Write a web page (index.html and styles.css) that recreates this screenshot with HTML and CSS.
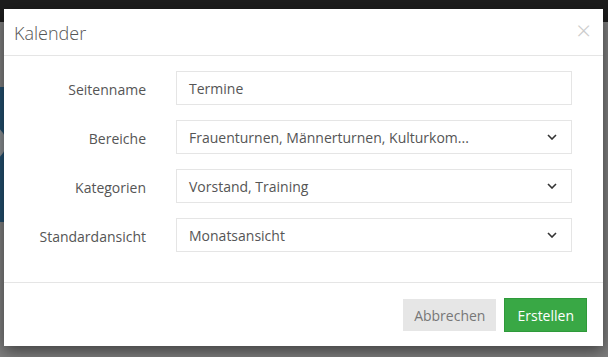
FILE: index.html
```html
<!DOCTYPE html>
<html lang="de">
<head>
    <meta charset="UTF-8">
    <meta name="viewport" content="width=device-width, initial-scale=1.0">
    <title>Kalender</title>
    <link rel="stylesheet" href="styles.css">
</head>
<body>
    <div class="topbar"></div>
    <div class="page">
        <div class="hero">
            <span class="hero-circle"></span>
        </div>
    </div>

    <div class="modal">
        <div class="modal-header">
            <h4 class="modal-title">Kalender</h4>
            <span class="close">&times;</span>
        </div>

        <div class="modal-body">
            <label class="form-label">Seitenname</label>
            <div class="form-control">Termine</div>

            <label class="form-label">Bereiche</label>
            <div class="form-control select">
                <span class="value">Frauenturnen, Männerturnen, Kulturkom...</span>
                <svg class="chevron" width="10" height="6" viewBox="0 0 10 6"><path d="M1 1l4 4 4-4" fill="none" stroke="#333" stroke-width="1.6"/></svg>
            </div>

            <label class="form-label">Kategorien</label>
            <div class="form-control select">
                <span class="value">Vorstand, Training</span>
                <svg class="chevron" width="10" height="6" viewBox="0 0 10 6"><path d="M1 1l4 4 4-4" fill="none" stroke="#333" stroke-width="1.6"/></svg>
            </div>

            <label class="form-label">Standardansicht</label>
            <div class="form-control select">
                <span class="value">Monatsansicht</span>
                <svg class="chevron" width="10" height="6" viewBox="0 0 10 6"><path d="M1 1l4 4 4-4" fill="none" stroke="#333" stroke-width="1.6"/></svg>
            </div>
        </div>

        <div class="modal-footer">
            <button class="btn btn-default">Abbrechen</button>
            <button class="btn btn-success">Erstellen</button>
        </div>
    </div>
</body>
</html>
```

FILE: styles.css
```css
body {
    margin: 0;
    font-family: 'Open Sans', 'Liberation Sans', sans-serif;
    font-size: 14px;
    color: #555;
    background-color: #7f7f7f;
    height: 357px;
    overflow: hidden;
}
.topbar {
    height: 22px;
    background-color: #1d1d1d;
}
.page {
    padding-top: 65px;
}
.hero {
    width: 120px;
    height: 135px;
    background-color: #23506f;
    position: relative;
}
.hero-circle {
    position: absolute;
    left: -30px;
    top: 38px;
    width: 36px;
    height: 36px;
    border-radius: 50%;
    background-color: #8a8f93;
}
.modal {
    position: absolute;
    top: 9px;
    left: 4px;
    width: 599px;
    background-color: #fff;
    box-shadow: 0 5px 15px rgba(0, 0, 0, 0.5);
}
.modal-header {
    display: flex;
    justify-content: space-between;
    align-items: flex-start;
    padding: 12px 12px 10px 10px;
    border-bottom: 1px solid #e5e5e5;
}
.modal-title {
    margin: 0;
    font-size: 18px;
    font-weight: 300;
    line-height: 24px;
    color: #555;
}
.close {
    font-size: 26px;
    line-height: 14px;
    margin-top: 2px;
    color: #ccc;
    font-weight: 300;
}
.modal-body {
    display: grid;
    grid-template-columns: 127px 1fr;
    column-gap: 30px;
    row-gap: 15px;
    padding: 15px 31px 30px 15px;
    align-items: center;
}
.form-label {
    text-align: right;
    color: #555;
    padding-top: 2px;
}
.form-control {
    height: 32px;
    border: 1px solid #e5e5e5;
    padding: 0 12px;
    display: flex;
    align-items: center;
    justify-content: space-between;
    color: #555;
}
.chevron {
    margin-right: 2px;
}
.modal-footer {
    display: flex;
    justify-content: flex-end;
    gap: 8px;
    padding: 15px 16px 14px 15px;
    border-top: 1px solid #e5e5e5;
}
.btn {
    font-family: 'Open Sans', 'Liberation Sans', sans-serif;
    font-size: 14px;
    height: 33px;
    padding: 0 12px;
    border: 1px solid transparent;
    border-radius: 0;
}
.btn-default {
    background-color: #e6e6e6;
    color: #777;
    margin-top: 1px;
    height: 32px;
    padding: 0 10px;
}
.btn-success {
    background-color: #39a845;
    border-color: #2e9a3a;
    color: #fff;
    height: 34px;
}
```
